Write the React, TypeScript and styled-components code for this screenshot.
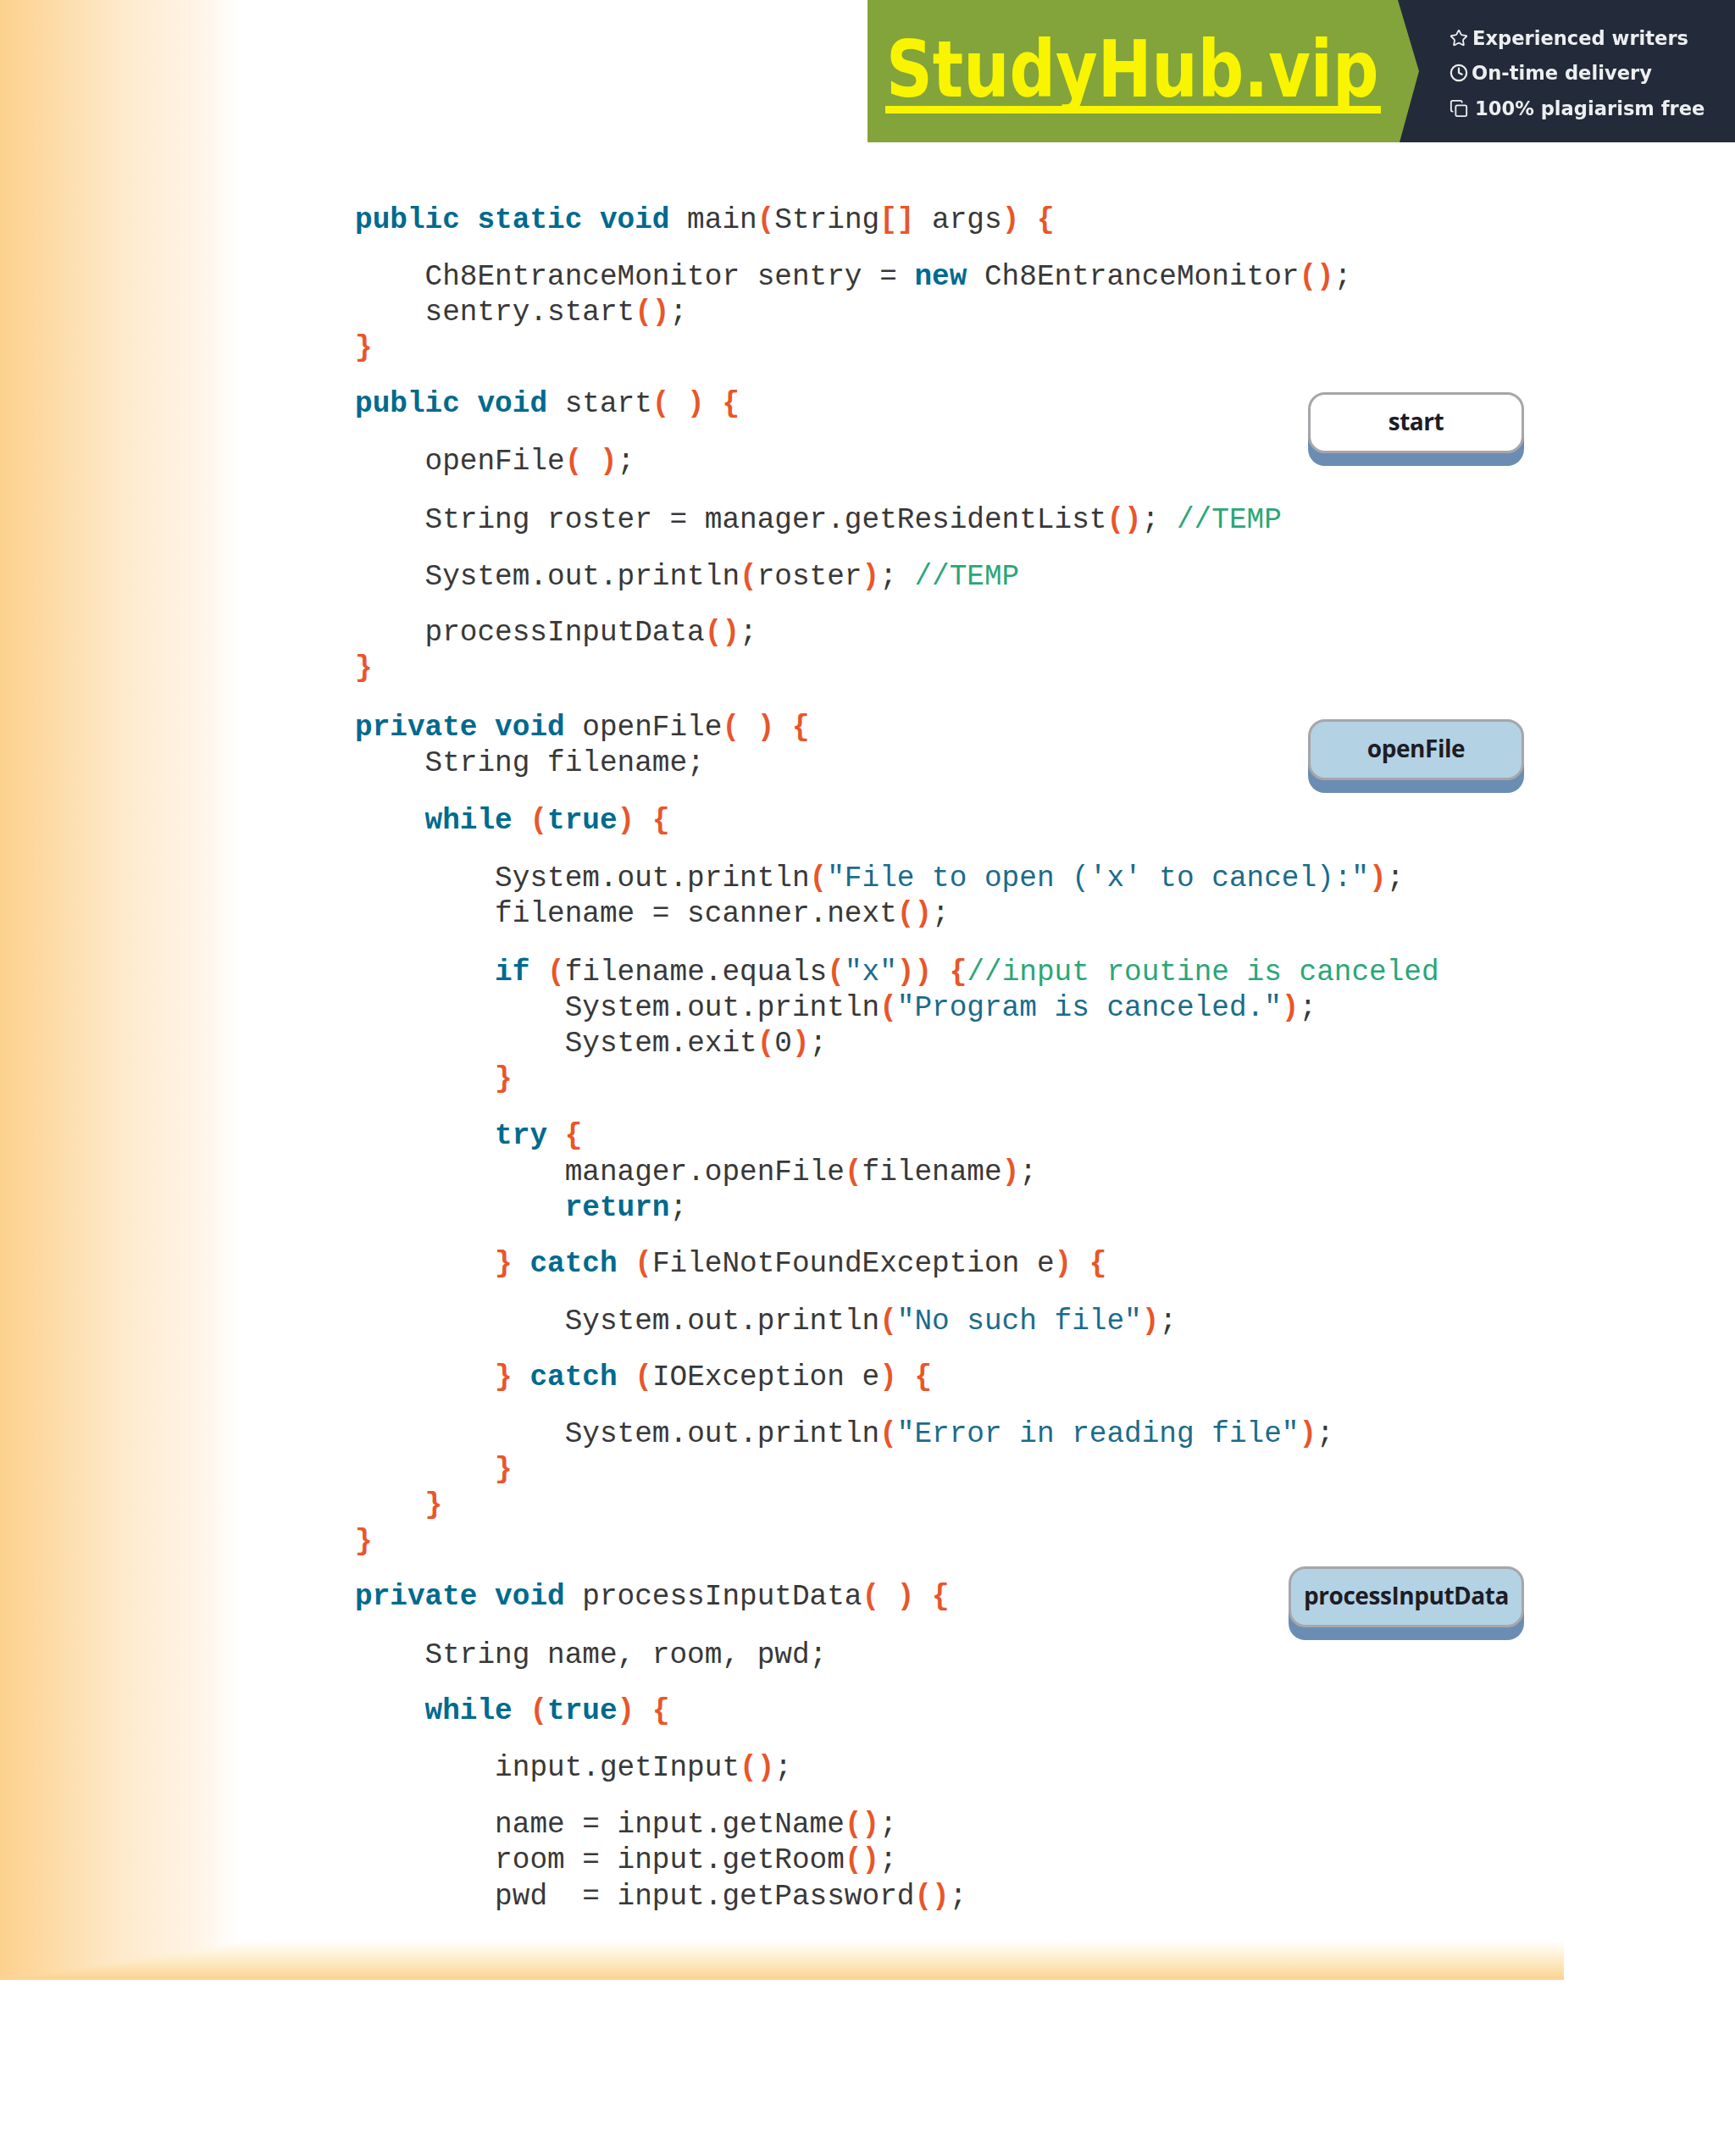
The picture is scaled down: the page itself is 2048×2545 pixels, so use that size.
import React from "react";
import styled, { createGlobalStyle } from "styled-components";
import { Star, Clock, Copy } from "lucide-react";

const Global = createGlobalStyle`
  html, body { margin: 0; padding: 0; background: #fff; }
`;

const Page = styled.div`
  position: relative;
  width: 2048px;
  height: 2545px;
  overflow: hidden;
  background-color: #fff;
  background-image:
    linear-gradient(to right, #fcd18f 0, #fddba6 60px, #feeacd 145px, #fff5e9 240px, #fff 282px),
    linear-gradient(to top, #fbd28f 0, #fde7bd 18px, #fff6e4 35px, #fff 46px);
  background-size: 1846px 2337px;
  background-repeat: no-repeat;
  background-blend-mode: darken;
`;

const Banner = styled.header`
  position: relative;
  width: 1024px;
  height: 168px;
  margin-left: 1024px;
  background: #82a43a;
`;

const Logo = styled.div`
  position: absolute;
  left: 21px;
  top: 22px;
  width: 585px;
  height: 112px;
  border-bottom: 9px solid #f9f500;
  box-sizing: border-box;
`;

const LogoText = styled.div`
  margin: 6px 0 0 1px;
  font-family: "DejaVu Sans", sans-serif;
  font-weight: 700;
  font-size: 92px;
  line-height: 110px;
  height: 97px;
  color: #f9f500;
  white-space: nowrap;
  transform: scaleX(0.828);
  transform-origin: 0 0;
  filter: blur(0.5px);
`;

const Perks = styled.ul`
  position: absolute;
  right: 0;
  top: 0;
  width: 398px;
  height: 168px;
  margin: 0;
  padding: 30.5px 0 0 61px;
  box-sizing: border-box;
  list-style: none;
  background: #232b3a;
  clip-path: polygon(0 0, 100% 0, 100% 100%, 2px 100%, 25px 50%);
  display: flex;
  flex-direction: column;
  gap: 13.5px;
`;

const Perk = styled.li<{ $gap: number }>`
  display: flex;
  align-items: center;
  gap: ${(p) => p.$gap}px;
  height: 28px;
  font-family: "DejaVu Sans", sans-serif;
  font-weight: 700;
  font-size: 22.6px;
  color: #eceef0;
  white-space: nowrap;
  filter: blur(0.5px);
`;

const Code = styled.main`
  margin: 0;
  padding: 70.5px 0 0 419px;
  font-family: "Liberation Mono", monospace;
  font-size: 34.4px;
  line-height: 42.2px;
  color: #383838;
`;

const Line = styled.div<{ $indent?: number; $gap?: number }>`
  position: relative;
  white-space: pre;
  height: 42.2px;
  padding-left: ${(p) => (p.$indent ?? 0) * 82.56}px;
  margin-top: ${(p) => p.$gap ?? 0}px;
`;

const K = styled.span`
  font-weight: 700;
  color: #006a8e;
`;
const P = styled.span`
  font-weight: 700;
  color: #e8562a;
`;
const S = styled.span`
  color: #1b6c8a;
`;
const C = styled.span`
  color: #2ba678;
`;

const Tag = styled.div<{ $width: number; $offset: number; $tint?: boolean }>`
  position: absolute;
  top: ${(p) => p.$offset}px;
  left: ${(p) => 1380 - p.$width}px;
  box-sizing: border-box;
  width: ${(p) => p.$width}px;
  height: 72px;
  padding-bottom: 3px;
  border: 3.5px solid #a6a6ab;
  border-radius: 20px;
  background: ${(p) => (p.$tint ? "#b3d2e4" : "#fff")};
  box-shadow: 0 15px 0 0 #6b8db3;
  display: flex;
  align-items: center;
  justify-content: center;
  font-family: "Open Sans", sans-serif;
  font-weight: 700;
  font-size: 28px;
  letter-spacing: -0.45px;
  line-height: 1;
  color: #1d1d25;
`;

export default function App() {
  return (
    <Page>
      <Global />
      <Banner>
        <Logo>
          <LogoText>StudyHub.vip</LogoText>
        </Logo>
        <Perks>
          <Perk $gap={5}><Star size={22} strokeWidth={2} />Experienced writers</Perk>
          <Perk $gap={4}><Clock size={22} strokeWidth={2.4} />On-time delivery</Perk>
          <Perk $gap={8}><Copy size={22} strokeWidth={2} />100% plagiarism free</Perk>
        </Perks>
      </Banner>
      <Code>
        <Line><K>public static void</K> main<P>(</P>String<P>[]</P> args<P>)</P> <P>{"{"}</P></Line>
        <Line $indent={1} $gap={25.4}>Ch8EntranceMonitor sentry = <K>new</K> Ch8EntranceMonitor<P>()</P>;</Line>
        <Line $indent={1}>sentry.start<P>()</P>;</Line>
        <Line><P>{"}"}</P></Line>
        <Line $gap={23.3}>
          <K>public void</K> start<P>( )</P> <P>{"{"}</P>
          <Tag $width={255} $offset={7}>start</Tag>
        </Line>
        <Line $indent={1} $gap={26.1}>openFile<P>( )</P>;</Line>
        <Line $indent={1} $gap={26.2}>String roster = manager.getResidentList<P>()</P>; <C>//TEMP</C></Line>
        <Line $indent={1} $gap={25.4}>System.out.println<P>(</P>roster<P>)</P>; <C>//TEMP</C></Line>
        <Line $indent={1} $gap={23.8}>processInputData<P>()</P>;</Line>
        <Line><P>{"}"}</P></Line>
        <Line $gap={27.5}>
          <K>private void</K> openFile<P>( )</P> <P>{"{"}</P>
          <Tag $width={255} $offset={10.5} $tint>openFile</Tag>
        </Line>
        <Line $indent={1}>String filename;</Line>
        <Line $indent={1} $gap={25.2}><K>while</K> <P>(</P><K>true</K><P>)</P> <P>{"{"}</P></Line>
        <Line $indent={2} $gap={26.1}>System.out.println<P>(</P><S>"File to open ('x' to cancel):"</S><P>)</P>;</Line>
        <Line $indent={2}>filename = scanner.next<P>()</P>;</Line>
        <Line $indent={2} $gap={26.4}><K>if</K> <P>(</P>filename.equals<P>(</P><S>"x"</S><P>))</P> <P>{"{"}</P><C>//input routine is canceled</C></Line>
        <Line $indent={3}>System.out.println<P>(</P><S>"Program is canceled."</S><P>)</P>;</Line>
        <Line $indent={3}>System.exit<P>(</P>0<P>)</P>;</Line>
        <Line $indent={2}><P>{"}"}</P></Line>
        <Line $indent={2} $gap={25.1}><K>try</K> <P>{"{"}</P></Line>
        <Line $indent={3}>manager.openFile<P>(</P>filename<P>)</P>;</Line>
        <Line $indent={3}><K>return</K>;</Line>
        <Line $indent={2} $gap={24.4}><P>{"}"}</P> <K>catch</K> <P>(</P>FileNotFoundException e<P>)</P> <P>{"{"}</P></Line>
        <Line $indent={3} $gap={25.2}>System.out.println<P>(</P><S>"No such file"</S><P>)</P>;</Line>
        <Line $indent={2} $gap={24.4}><P>{"}"}</P> <K>catch</K> <P>(</P>IOException e<P>)</P> <P>{"{"}</P></Line>
        <Line $indent={3} $gap={24.5}>System.out.println<P>(</P><S>"Error in reading file"</S><P>)</P>;</Line>
        <Line $indent={2}><P>{"}"}</P></Line>
        <Line $indent={1}><P>{"}"}</P></Line>
        <Line><P>{"}"}</P></Line>
        <Line $gap={23.5}>
          <K>private void</K> processInputData<P>( )</P> <P>{"{"}</P>
          <Tag $width={278} $offset={-15.5} $tint>processInputData</Tag>
        </Line>
        <Line $indent={1} $gap={26.8}>String name, room, pwd;</Line>
        <Line $indent={1} $gap={23.8}><K>while</K> <P>(</P><K>true</K><P>)</P> <P>{"{"}</P></Line>
        <Line $indent={2} $gap={24.4}>input.getInput<P>()</P>;</Line>
        <Line $indent={2} $gap={25.2}>name = input.getName<P>()</P>;</Line>
        <Line $indent={2}>room = input.getRoom<P>()</P>;</Line>
        <Line $indent={2}>pwd  = input.getPassword<P>()</P>;</Line>
      </Code>
    </Page>
  );
}
